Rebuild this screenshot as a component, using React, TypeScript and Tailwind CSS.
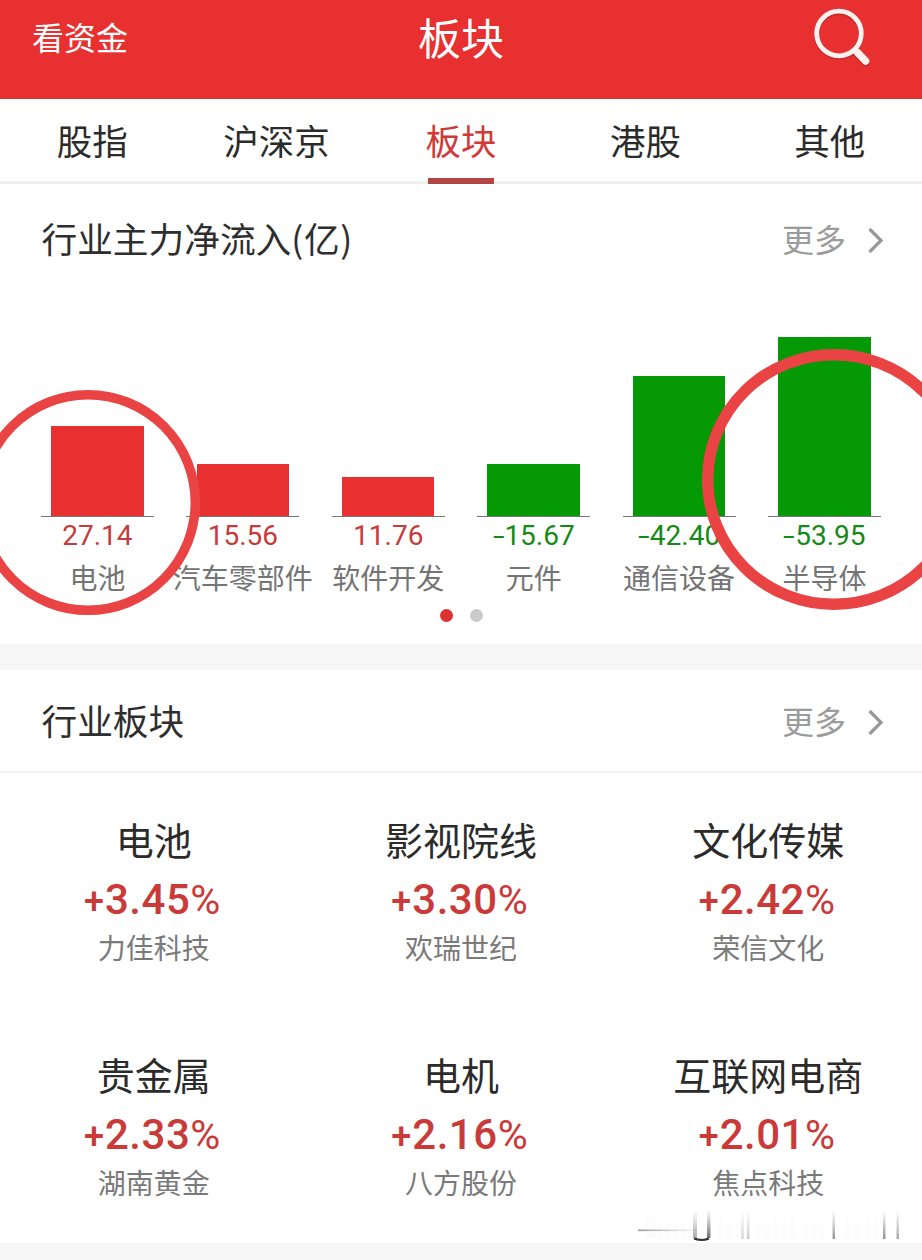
const CJK = "font-['Noto_Sans_CJK_SC','Noto_Sans',sans-serif]";
const NUM = "font-[Roboto,sans-serif]";

const tabs = ['股指', '沪深京', '板块', '港股', '其他'];

const bars = [
  { name: '电池', value: '27.14', height: 90, up: true },
  { name: '汽车零部件', value: '15.56', height: 52, up: true },
  { name: '软件开发', value: '11.76', height: 39, up: true },
  { name: '元件', value: '-15.67', height: 52, up: false },
  { name: '通信设备', value: '-42.40', height: 140, up: false },
  { name: '半导体', value: '-53.95', height: 179, up: false },
];

const sectors = [
  { name: '电池', change: '3.45', lead: '力佳科技' },
  { name: '影视院线', change: '3.30', lead: '欢瑞世纪' },
  { name: '文化传媒', change: '2.42', lead: '荣信文化' },
  { name: '贵金属', change: '2.33', lead: '湖南黄金' },
  { name: '电机', change: '2.16', lead: '八方股份' },
  { name: '互联网电商', change: '2.01', lead: '焦点科技' },
];

function Header() {
  return (
    <header className="grid h-[99px] grid-cols-3 items-start border-b border-[#c9383a] bg-[#e83030] pr-[49px] pl-8 text-white">
      <span className="pt-[16px] text-[32px] leading-[40px]">看资金</span>
      <h1 className="pt-[11px] pl-[17px] text-center text-[43px] leading-[50px]">板块</h1>
      <svg className="mt-[6px] h-[64px] w-[62px] justify-self-end" viewBox="0 0 62 64" fill="none">
        <g stroke="#8f2020" strokeOpacity="0.4" transform="translate(0 1.5)">
          <circle cx="28" cy="27.5" r="22.3" strokeWidth="5" />
          <path d="M45 45.5 54.5 55" strokeWidth="8" strokeLinecap="round" />
        </g>
        <circle cx="28" cy="27.5" r="22.3" stroke="#fff1ef" strokeWidth="4.8" />
        <path d="M43.5 44 46 46.5" stroke="#fff1ef" strokeWidth="6" />
        <path d="M46.5 46.5 54.5 55" stroke="#fff1ef" strokeWidth="7.6" strokeLinecap="round" />
      </svg>
    </header>
  );
}

function Tabs() {
  return (
    <nav className="grid h-[85px] grid-cols-5 border-b-[3px] border-[#efefef]">
      {tabs.map((t) => (
        <div
          key={t}
          className={
            'flex flex-col items-center pt-[19px] text-[35.5px] leading-[44px] ' +
            (t === '板块' ? 'text-[#cf3a38]' : 'text-[#2b2b2b]')
          }
        >
          {t}
          {t === '板块' && <i className="mt-[16px] h-[6px] w-[66px] shrink-0 bg-[#b24444]" />}
        </div>
      ))}
    </nav>
  );
}

function SectionTitle({ title, unit }: { title: string; unit?: string }) {
  return (
    <div className="flex h-[44px] items-center justify-between pr-[37px] pl-[41.5px]">
      <h2 className="pb-[2px] text-[35.7px] leading-[42px] text-[#2e2e2e]">
        {title}
        {unit && <span className="tracking-[0.6px]">({unit})</span>}
      </h2>
      <div className="flex items-center text-[32px] leading-[42px] text-[#9b9b9b]">
        <span className="pb-[2px]">更多</span>
        <svg className="mt-px ml-[21px] h-[26px] w-[18px]" viewBox="0 0 18 26" fill="none">
          <path d="M2.5 2 14 13.500 2.5 25" stroke="#999" strokeWidth="3.3" />
        </svg>
      </div>
    </div>
  );
}

export default function App() {
  return (
    <div className={`relative flex h-[1260px] w-[922px] flex-col overflow-hidden bg-white ${CJK}`}>
      <Header />
      <Tabs />

      <section className="h-[460px] pt-[33px]">
        <SectionTitle title="行业主力净流入" unit="亿" />
        <div className="flex h-[336px] items-end pr-[24.8px] pl-[24.7px]">
          {bars.map((b) => (
            <div key={b.name} className="flex flex-1 flex-col items-center">
              <div
                className={'w-[92.5px] ' + (b.up ? 'bg-[#e83030]' : 'bg-[#059a05]')}
                style={{ height: b.height }}
              />
              <div className="h-px w-[113px] bg-[#777]" />
              <div
                className={
                  `mt-[2px] h-[34px] text-[28px] leading-[34px] ${NUM} ` +
                  (b.up ? 'text-[#c53a3a]' : 'text-[#158a15]')
                }
              >
                {b.up ? (
                  b.value
                ) : (
                  <>
                    <span className="mr-[2px] ml-[2px] inline-block origin-center scale-x-150">-</span>
                    {b.value.slice(1)}
                  </>
                )}
              </div>
              <div className="mt-[5px] mb-px h-[38px] text-[28px] leading-[38px] whitespace-nowrap text-[#747474]">
                {b.name}
              </div>
            </div>
          ))}
        </div>
        <div className="mt-[12px] flex justify-center gap-[17px]">
          <i className="size-[13px] rounded-full bg-[#db3232]" />
          <i className="size-[13px] rounded-full bg-[#cbcbcb]" />
        </div>
      </section>

      <div className="h-[26px] shrink-0 bg-[#f6f6f6]" />

      <section className="h-[573px] shrink-0">
        <div className="h-[103px] border-b-2 border-[#f1f1f1] pt-[29px]">
          <SectionTitle title="行业板块" />
        </div>
        <div className="grid grid-cols-3">
          {sectors.map((s) => (
            <div key={s.name} className="flex h-[235px] flex-col items-center pt-[42px]">
              <div className="text-[38px] leading-[48px] text-[#2b2b2b]">{s.name}</div>
              <div
                className={`mt-[12px] flex h-[50px] items-baseline pr-[3px] text-[42px] leading-[50px] font-medium text-[#c93a38] ${NUM}`}
              >
                <span className="text-[36px]">+</span>
                <span className="ml-px tracking-[0.5px]">{s.change}</span>
                <span className="text-[41px] font-normal">%</span>
              </div>
              <div className="mt-[3px] text-[28px] leading-[38px] text-[#7a7a7a]">{s.lead}</div>
            </div>
          ))}
        </div>
      </section>
      <div className="h-[17px] shrink-0 bg-[#f6f6f6]" />

      <svg className="absolute top-0 left-0 h-[1260px] w-[922px]" viewBox="0 0 922 1260" fill="none">
        <ellipse cx="88" cy="502.5" rx="107.3" ry="107.8" stroke="#ea4343" strokeWidth="9.5" />
        <ellipse cx="834" cy="479.5" rx="126.3" ry="124.8" stroke="#ea4343" strokeWidth="11.4" />
        <defs>
          <linearGradient id="fade" x1="0" y1="1210" x2="0" y2="1240" gradientUnits="userSpaceOnUse">
            <stop offset="0" stopColor="#444" stopOpacity="0" />
            <stop offset="1" stopColor="#222" stopOpacity="0.7" />
          </linearGradient>
          <linearGradient id="streak" x1="638" y1="0" x2="695" y2="0" gradientUnits="userSpaceOnUse">
            <stop offset="0" stopColor="#555" stopOpacity="0.6" />
            <stop offset="1" stopColor="#999" stopOpacity="0.1" />
          </linearGradient>
        </defs>
        <rect x="638" y="1229.5" width="57" height="1.6" fill="url(#streak)" />
        <g fill="url(#fade)">
          <rect x="693" y="1211" width="4" height="27" opacity="0.6" />
          <rect x="707" y="1211" width="3.5" height="27" />
          <rect x="741" y="1211" width="3" height="28" opacity="0.25" />
          <rect x="747" y="1211" width="2.5" height="28" opacity="0.35" />
          <rect x="832.5" y="1211" width="2.5" height="28" opacity="0.7" />
          <rect x="883" y="1211" width="2.5" height="28" opacity="0.75" />
          <rect x="896.5" y="1211" width="2.5" height="28" opacity="0.6" />
          {[645, 651, 657, 665, 673, 681, 718, 727, 735, 756, 764, 773, 781, 790, 803, 812, 820, 845, 855, 865, 873].map((x) => (
            <rect key={x} x={x} y="1211" width="5" height="27" opacity="0.03" />
          ))}
        </g>
        <path d="M694 1238.500q8 3 15 0" stroke="#333" strokeWidth="2" />
      </svg>
    </div>
  );
}
